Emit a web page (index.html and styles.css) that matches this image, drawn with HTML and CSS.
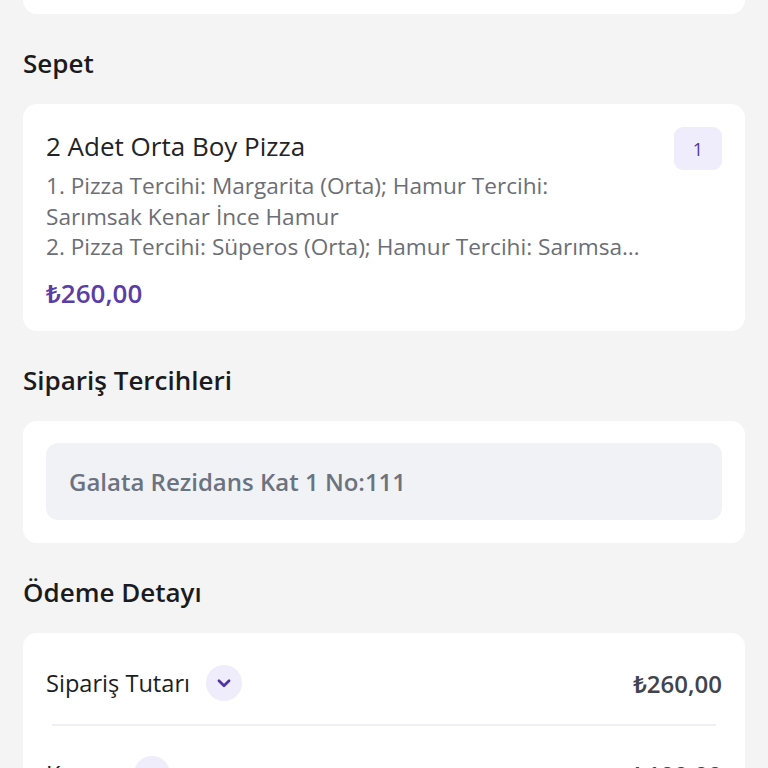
FILE: index.html
```html
<!DOCTYPE html>
<html lang="tr">

<head>
    <meta charset="utf-8">
    <title>Sepet</title>
    <link rel="stylesheet" href="styles.css">
</head>

<body>
    <div class="page">
        <div class="card card-stub"></div>

        <h2 class="section-title">Sepet</h2>
        <div class="card basket-item">
            <div class="item-info">
                <div class="item-name">2 Adet Orta Boy Pizza</div>
                <div class="item-desc">1. Pizza Tercihi: Margarita (Orta); Hamur Tercihi: Sarımsak Kenar İnce Hamur<br>2. Pizza Tercihi: Süperos (Orta); Hamur Tercihi: Sarımsak Kenar İnce Hamur</div>
                <div class="item-price">₺260,00</div>
            </div>
            <div class="qty-badge">1</div>
        </div>

        <h2 class="section-title">Sipariş Tercihleri</h2>
        <div class="card prefs">
            <div class="address-box">Galata Rezidans Kat 1 No:111</div>
        </div>

        <h2 class="section-title">Ödeme Detayı</h2>
        <div class="card payment">
            <div class="pay-row">
                <div class="pay-label">
                    <span>Sipariş Tutarı</span>
                    <span class="toggle">
                        <svg width="18" height="18" viewBox="0 0 16 16"><path d="M3.5 6 L8 10.5 L12.5 6" fill="none" stroke="#4f35a3" stroke-width="2.4" stroke-linecap="round" stroke-linejoin="round"/></svg>
                    </span>
                </div>
                <div class="pay-value">₺260,00</div>
            </div>
            <div class="divider"></div>
            <div class="pay-row">
                <div class="pay-label">
                    <span>Kupon</span>
                    <span class="toggle">
                        <svg width="18" height="18" viewBox="0 0 16 16"><path d="M3.5 6 L8 10.5 L12.5 6" fill="none" stroke="#4f35a3" stroke-width="2.4" stroke-linecap="round" stroke-linejoin="round"/></svg>
                    </span>
                </div>
                <div class="pay-value">₺100,00</div>
            </div>
        </div>
    </div>
</body>

</html>
```

FILE: styles.css
```css
* {
    padding: 0;
    margin: 0;
    box-sizing: border-box;
}

body {
    background-color: #f4f4f5;
    font-family: 'Open Sans', 'Noto Sans', sans-serif;
    color: #1d1d1f;
    overflow: hidden;
}

.page {
    width: 768px;
    padding: 0 23px;
}

.card {
    background-color: #ffffff;
    border-radius: 14px;
}

.card-stub {
    height: 14px;
    border-radius: 0 0 14px 14px;
}

.section-title {
    font-size: 26px;
    font-weight: 600;
    line-height: 32px;
    margin: 33px 0 25px;
    color: #1b1b1d;
}

.basket-item {
    display: flex;
    align-items: flex-start;
    gap: 24px;
    padding: 23px;
    height: 227px;
}

.item-info {
    flex: 1;
    min-width: 0;
}

.item-name {
    font-size: 26px;
    line-height: 38px;
    color: #222326;
}

.item-desc {
    margin-top: 6px;
    font-size: 22.6px;
    line-height: 30.5px;
    color: #6b6e75;
    display: -webkit-box;
    -webkit-line-clamp: 3;
    -webkit-box-orient: vertical;
    overflow: hidden;
}

.item-price {
    margin-top: 14px;
    font-size: 26px;
    font-weight: 600;
    line-height: 32px;
    color: #5a3ea6;
}

.qty-badge {
    width: 48px;
    height: 43px;
    border-radius: 9px;
    background-color: #efecfb;
    color: #4f35a3;
    font-size: 18px;
    display: flex;
    align-items: center;
    justify-content: center;
}

.prefs {
    padding: 22px 23px 23px;
}

.address-box {
    height: 77px;
    border-radius: 12px;
    background-color: #f1f2f5;
    padding: 0 23px;
    display: flex;
    align-items: center;
    font-size: 24px;
    font-weight: 600;
    color: #6b7280;
}

.payment {
    padding: 14px 23px 20px;
}

.pay-row {
    display: flex;
    align-items: center;
    justify-content: space-between;
    height: 72px;
}

.pay-label {
    display: flex;
    align-items: center;
    gap: 16px;
    font-size: 23.6px;
    font-weight: 500;
    color: #1d1d1f;
}

.toggle {
    width: 36px;
    height: 36px;
    border-radius: 50%;
    background-color: #efecfb;
    display: flex;
    align-items: center;
    justify-content: center;
}

.pay-value {
    font-size: 24px;
    font-weight: 600;
    color: #3f4450;
}

.divider {
    height: 2px;
    margin: 5px 6px 12px;
    background-color: #eef0f5;
}
```
